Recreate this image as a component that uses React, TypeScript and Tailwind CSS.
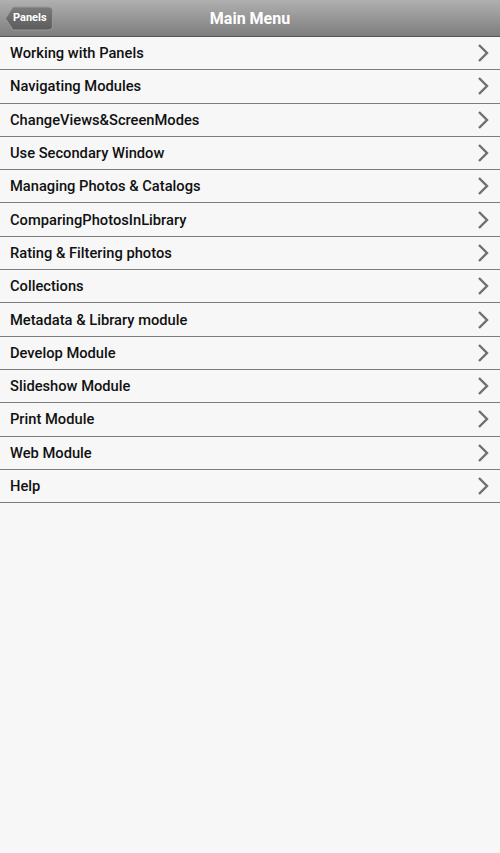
const items = [
  "Working with Panels",
  "Navigating Modules",
  "ChangeViews&ScreenModes",
  "Use Secondary Window",
  "Managing Photos & Catalogs",
  "ComparingPhotosInLibrary",
  "Rating & Filtering photos",
  "Collections",
  "Metadata & Library module",
  "Develop Module",
  "Slideshow Module",
  "Print Module",
  "Web Module",
  "Help",
];

function Chevron() {
  return (
    <svg width="14" height="20" viewBox="0 0 14 20" className="text-[#6f6f6f]">
      <path d="M3 2 L11 10 L3 18" fill="none" stroke="currentColor" strokeWidth="2.4" strokeLinecap="butt" />
    </svg>
  );
}

export default function App() {
  return (
    <div className="min-h-screen w-full bg-[#f7f7f7] font-['Roboto','Liberation_Sans',sans-serif]">
      {/* Header */}
      <header className="relative h-[37px] flex items-center justify-center bg-gradient-to-b from-[#b0b0b0] to-[#7e7e7e] border-b border-[#555]">
        <button className="absolute left-[4px] top-[6px] w-[50px] h-[25px] flex items-center">
          <svg width="50" height="25" viewBox="0 0 50 25" className="absolute inset-0">
            <defs>
              <linearGradient id="bk" x1="0" y1="0" x2="0" y2="1">
                <stop offset="0" stopColor="#7b7b7b" />
                <stop offset="1" stopColor="#5c5c5c" />
              </linearGradient>
            </defs>
            <path
              d="M1.5 12.5 L9 1 H44 Q48.5 1 48.5 5.5 V19.5 Q48.5 24 44 24 H9 Z"
              fill="url(#bk)"
              stroke="#9a9a9a"
              strokeWidth="1"
            />
          </svg>
          <span className="relative pl-[9px] text-white text-[11px] font-bold">Panels</span>
        </button>
        <h1 className="text-white text-[16px] font-bold pt-px">Main Menu</h1>
      </header>

      {/* Menu list */}
      <ul>
        {items.map((label) => (
          <li
            key={label}
            className="h-[33.3px] flex items-center justify-between pl-[10px] pr-[10px] border-b border-[#7c7c7c] text-[14.7px] font-medium text-[#111]"
          >
            <span>{label}</span>
            <Chevron />
          </li>
        ))}
      </ul>
    </div>
  );
}
